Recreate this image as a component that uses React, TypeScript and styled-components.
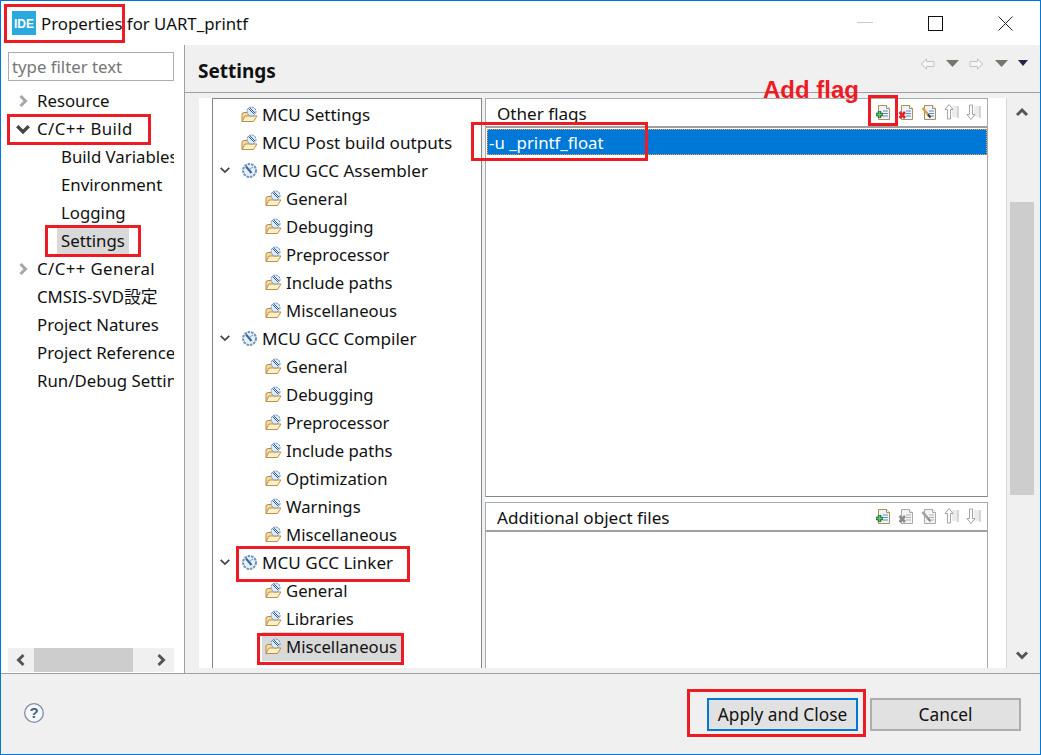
import React from "react";
import styled, { createGlobalStyle } from "styled-components";

const UI_FONT = '"Noto Sans", "Noto Sans CJK JP", sans-serif';
const RED = "#ed1c24";
const LINE = "#a0a0a0";

const GlobalStyle = createGlobalStyle`
  html, body {
    margin: 0;
    padding: 0;
    background: #fff;
  }
  * {
    box-sizing: border-box;
  }
`;

const Window = styled.div`
  position: relative;
  width: 1041px;
  height: 755px;
  border: 1px solid #0078d7;
  display: flex;
  flex-direction: column;
  overflow: hidden;
  font-family: ${UI_FONT};
  font-size: 16.8px;
  color: #111;
  background: #fff;
`;

const TitleBar = styled.div`
  height: 44px;
  flex: none;
  display: flex;
  align-items: center;
  padding-left: 11px;
`;

const TitleText = styled.span`
  margin-left: 5px;
`;

const WindowButtons = styled.div`
  margin-left: auto;
  display: flex;
`;

const WindowButton = styled.div`
  width: 70px;
  height: 44px;
  display: flex;
  align-items: center;
  justify-content: center;
`;

const Body = styled.div`
  flex: 1;
  min-height: 0;
  display: flex;
`;

const Sidebar = styled.div`
  width: 184px;
  flex: none;
  border-right: 1px solid ${LINE};
  padding: 7px 10px 1px 7px;
  display: flex;
  flex-direction: column;
`;

const FilterInput = styled.input`
  height: 29px;
  flex: none;
  width: 100%;
  border: 1px solid #abadb3;
  padding: 0 3px;
  font-family: ${UI_FONT};
  font-size: 16.8px;
  outline: none;
  &::placeholder {
    color: #777;
    opacity: 1;
  }
`;

const SideTree = styled.div`
  flex: 1;
  min-height: 0;
  margin-top: 6px;
  overflow: hidden;
`;

const Row = styled.div<{ $indent?: number }>`
  height: 28px;
  display: flex;
  align-items: center;
  white-space: nowrap;
  padding-left: ${(p) => p.$indent ?? 0}px;
`;

const Twisty = styled.span<{ $width: number; $shift?: number }>`
  width: ${(p) => p.$width}px;
  flex: none;
  display: flex;
  align-items: center;
  justify-content: center;
  padding-right: ${(p) => p.$shift ?? 0}px;
`;

const Label = styled.span<{ $selected?: boolean; $wide?: boolean }>`
  height: 27px;
  line-height: 26px;
  padding: 0 4px;
  margin-left: -4px;
  letter-spacing: ${(p) => (p.$wide ? "0.4px" : "normal")};
  background: ${(p) => (p.$selected ? "#d9d9d9" : "transparent")};
`;

const TreeItem = styled.span<{ $selected?: boolean; $child?: boolean }>`
  height: 29px;
  display: inline-flex;
  align-items: center;
  padding: 0 4px 0 3px;
  margin-left: -3px;
  font-size: ${(p) => (p.$child ? "16.7px" : "17.1px")};
  background: ${(p) => (p.$selected ? "#d9d9d9" : "transparent")};
`;

const HScroll = styled.div`
  height: 24px;
  flex: none;
  background: #f0f0f0;
  display: grid;
  grid-template-columns: 26px 99px 1fr 26px;
`;

const ScrollButton = styled.div`
  display: flex;
  align-items: center;
  justify-content: center;
  &:last-child {
    grid-column: 4;
  }
`;

const HThumb = styled.div`
  background: #cdcdcd;
`;

const Main = styled.div`
  flex: 1;
  min-width: 0;
  display: flex;
  flex-direction: column;
`;

const PageHeader = styled.div`
  height: 48px;
  flex: none;
  background: #f0f0f0;
  border-bottom: 1px solid ${LINE};
  display: flex;
  align-items: center;
  padding: 4px 12px 0 13px;
`;

const PageTitle = styled.h1`
  margin: 0;
  font-size: 19px;
  font-weight: 700;
`;

const HeaderTools = styled.div`
  margin-left: auto;
  margin-top: -14px;
  display: flex;
  align-items: center;
  gap: 10.5px;
`;

const PageContent = styled.div`
  flex: 1;
  min-height: 0;
  display: flex;
  background: #f0f0f0;
`;

const ScrolledArea = styled.div`
  flex: 1;
  min-width: 0;
  display: flex;
  flex-direction: column;
  padding: 5px 0 5px 14px;
`;

const Panes = styled.div`
  flex: 1;
  min-height: 0;
  display: flex;
  padding-left: 13px;
  background: #fff;
  border-right: 1px solid #d8d8d8;
`;

const TreePane = styled.div`
  width: 270px;
  flex: none;
  border: 1px solid #82878f;
  border-bottom: none;
  padding-top: 1px;
  overflow: hidden;
`;

const PaneSash = styled.div`
  width: 3px;
  flex: none;
  background: #f0f0f0;
`;

const IconSlot = styled.span`
  display: inline-flex;
  margin-right: 4px;
`;

const Lists = styled.div`
  flex: 1;
  min-width: 0;
  margin-right: 18px;
  display: flex;
  flex-direction: column;
  gap: 5px;
`;

const Section = styled.section<{ $grow?: boolean }>`
  height: ${(p) => (p.$grow ? "auto" : "399px")};
  flex: ${(p) => (p.$grow ? 1 : "none")};
  min-height: 0;
  border: 1px solid #a8abb0;
  border-bottom: ${(p) => (p.$grow ? "none" : "1px solid #82878f")};
  display: flex;
  flex-direction: column;
`;

const SectionHeader = styled.div`
  height: 29px;
  flex: none;
  display: flex;
  align-items: center;
  padding: 2px 6px 0 11px;
  font-size: 17.1px;
  border-bottom: 2px solid #a0a0a0;
`;

const SectionTools = styled.div`
  margin-left: auto;
  margin-top: -3px;
  display: flex;
  align-items: center;
  gap: 7px;
`;

const FlagRow = styled.div`
  height: 26px;
  margin: 1px 0 0 1px;
  padding-left: 2px;
  display: flex;
  align-items: center;
  background: #0078d7;
  color: #fff;
  outline: 1px dotted #f0a040;
  outline-offset: -1px;
`;

const VScroll = styled.div`
  width: 24px;
  flex: none;
  margin: 0 6px 0 3px;
  display: flex;
  flex-direction: column;
`;

const VButton = styled.div`
  height: 37px;
  flex: none;
  display: flex;
  align-items: center;
  justify-content: center;
`;

const VTrack = styled.div`
  flex: 1;
  min-height: 0;
  padding-top: 72px;
`;

const VThumb = styled.div`
  height: 293px;
  background: #cdcdcd;
`;

const Footer = styled.div`
  height: 81px;
  flex: none;
  background: #f0f0f0;
  border-top: 1px solid ${LINE};
  display: flex;
  align-items: center;
  padding: 0 19px 0 23px;
`;

const HelpSlot = styled.div`
  display: flex;
  margin-bottom: 3px;
`;

const Buttons = styled.div`
  margin-left: auto;
  display: flex;
  gap: 12px;
`;

const DialogButton = styled.button<{ $primary?: boolean }>`
  width: 151px;
  height: 33px;
  padding: 0;
  background: #e1e1e1;
  border: 2px solid ${(p) => (p.$primary ? "#0078d7" : "#adadad")};
  font-family: ${UI_FONT};
  font-size: 17.3px;
  color: #111;
`;

const Callout = styled.div<{ $x: number; $y: number; $w: number; $h: number }>`
  position: absolute;
  left: ${(p) => p.$x - 1}px;
  top: ${(p) => p.$y - 1}px;
  width: ${(p) => p.$w}px;
  height: ${(p) => p.$h}px;
  border: 3px solid ${RED};
  pointer-events: none;
`;

const CalloutText = styled.div`
  position: absolute;
  left: 762px;
  top: 75px;
  color: ${RED};
  font-family: "Liberation Sans", Arial, sans-serif;
  font-size: 24px;
  font-weight: 700;
  line-height: 28px;
  white-space: nowrap;
`;

const AppLogo = () => (
  <svg width="24" height="24" viewBox="0 0 24 24">
    <rect width="24" height="24" fill="#29a9e0" />
    <text x="12" y="16.5" textAnchor="middle" fill="#fff" fontFamily="Liberation Sans, sans-serif" fontWeight="700" fontSize="12">IDE</text>
  </svg>
);

const Chevron = ({ dir, color, size = 14, weight = 3 }: { dir: "up" | "down" | "left" | "right"; color: string; size?: number; weight?: number }) => {
  const paths = {
    up: "M2 10 L7 5 L12 10",
    down: "M2 4.5 L7 9.5 L12 4.5",
    left: "M9.5 2 L4.5 7 L9.5 12",
    right: "M4.5 2 L9.5 7 L4.5 12",
  };
  return (
    <svg width={size} height={size} viewBox="0 0 14 14">
      <path d={paths[dir]} fill="none" stroke={color} strokeWidth={weight} />
    </svg>
  );
};

const ToolFolderIcon = () => (
  <svg width="17" height="17" viewBox="0 0 17 17">
    <path d="M1 15.5V7.5L3 6.5H6L7 8H11V15.5Z" fill="#f7dca0" stroke="#b98a45" />
    <path d="M1 15.5L4 10H16L12.5 15.5Z" fill="#fdf0c8" stroke="#c08e48" />
    <circle cx="10.5" cy="5.5" r="4.5" fill="#dfe9f3" stroke="#5b85b5" strokeDasharray="2 1" />
    <path d="M7.5 2.5L13 8M9 2L14 7" stroke="#2f5f98" strokeWidth="1" />
  </svg>
);

const ToolIcon = () => (
  <svg width="17" height="17" viewBox="0 0 17 17">
    <circle cx="8.5" cy="8.5" r="6.5" fill="#e8eff6" stroke="#6f93ba" strokeWidth="2" strokeDasharray="2.5 1" />
    <path d="M5 4.5L10.5 11" stroke="#38659b" strokeWidth="2" />
    <path d="M9 7L12 5" stroke="#7b9cc0" />
  </svg>
);

const DocIcon = ({ kind, disabled }: { kind: "add" | "remove" | "edit"; disabled?: boolean }) => {
  const outline = disabled ? "#a8a8a8" : "#a98f5c";
  const line = disabled ? "#b0b0b0" : "#5d8fc4";
  return (
    <svg width="16" height="18" viewBox="0 0 16 18">
      <path d="M3.5 2.5H11.5L14.5 5.5V16.5H3.5Z" fill={disabled ? "#f4f4f4" : "#eef3fa"} stroke={outline} />
      <path d="M11.5 2.5V5.5H14.5" fill="#fff" stroke={outline} />
      <path d="M8 8H13M8 10.5H13M8 13H13" stroke={line} />
      {kind === "add" && (
        <>
          <path d="M4.5 8V15M1 11.5H8" stroke="#1d6b35" strokeWidth="3.4" />
          <path d="M4.5 8.5V14.5M1.5 11.5H7.5" stroke="#6cc46a" strokeWidth="1.4" />
        </>
      )}
      {kind === "remove" && <path d="M1.5 9L7 15M7 9L1.5 15" stroke={disabled ? "#8c8c8c" : "#e0242c"} strokeWidth="2.6" />}
      {kind === "edit" && (
        <>
          <path d="M1.5 5L7.5 12" stroke={disabled ? "#a0a0a0" : "#d9a13c"} strokeWidth="2.6" />
          <path d="M7 11.5L9.5 14.5" stroke={disabled ? "#8c8c8c" : "#3a3a3a"} strokeWidth="2" />
        </>
      )}
    </svg>
  );
};

const MoveIcon = ({ dir }: { dir: "up" | "down" }) => (
  <svg width="15" height="18" viewBox="0 0 15 18">
    <rect x="8" y="3" width="6" height="11" fill="#ececec" />
    <path d="M14 3V15" stroke="#c8c8c8" strokeWidth="1.4" />
    <path
      d={dir === "up" ? "M5 1.5L1 6.5H3.5V16H6.5V6.5H9Z" : "M5 16.5L1 11.5H3.5V2H6.5V11.5H9Z"}
      fill="#fff"
      stroke="#a4a4a4"
    />
  </svg>
);

const NavArrow = ({ dir }: { dir: "left" | "right" }) => (
  <svg width="15" height="12" viewBox="0 0 15 12">
    <path
      d={dir === "left" ? "M6.5 1L1 6L6.5 11V8.5H14V3.5H6.5Z" : "M8.5 1L14 6L8.5 11V8.5H1V3.5H8.5Z"}
      fill="#f6f6f6"
      stroke="#c4c4c4"
    />
  </svg>
);

const DropTriangle = ({ dark }: { dark?: boolean }) => (
  <svg width={dark ? 10 : 13} height="7" viewBox={dark ? "0 0 10 7" : "0 0 13 7"}>
    <path d={dark ? "M0 0H10L5 6Z" : "M0 0H13L6.5 7Z"} fill={dark ? "#2a2248" : "#76766c"} />
  </svg>
);

const HelpIcon = () => (
  <svg width="20" height="20" viewBox="0 0 20 20">
    <circle cx="10" cy="10" r="9.3" fill="#f6f8fb" stroke="#7e8ea8" strokeWidth="1.3" />
    <text x="10" y="15.2" textAnchor="middle" fontFamily="Liberation Sans, sans-serif" fontWeight="700" fontSize="15" fill="#4a5f84">?</text>
  </svg>
);

const toolbarIcons = (disabled: boolean) => (
  <>
    <DocIcon kind="add" />
    <DocIcon kind="remove" disabled={disabled} />
    <DocIcon kind="edit" disabled={disabled} />
    <MoveIcon dir="up" />
    <MoveIcon dir="down" />
  </>
);

const sideItems = [
  { label: "Resource", open: false, arrow: true },
  { label: "C/C++ Build", open: true, arrow: true, wide: true },
  { label: "Build Variables", child: true },
  { label: "Environment", child: true },
  { label: "Logging", child: true },
  { label: "Settings", child: true, selected: true },
  { label: "C/C++ General", open: false, arrow: true, wide: true },
  { label: "CMSIS-SVD設定" },
  { label: "Project Natures" },
  { label: "Project References" },
  { label: "Run/Debug Settings" },
];

type ToolRow = { label: string; level: 0 | 1; group?: boolean; selected?: boolean };

const toolRows: ToolRow[] = [
  { label: "MCU Settings", level: 0 },
  { label: "MCU Post build outputs", level: 0 },
  { label: "MCU GCC Assembler", level: 0, group: true },
  ...["General", "Debugging", "Preprocessor", "Include paths", "Miscellaneous"].map((label) => ({ label, level: 1 as const })),
  { label: "MCU GCC Compiler", level: 0, group: true },
  ...["General", "Debugging", "Preprocessor", "Include paths", "Optimization", "Warnings", "Miscellaneous"].map((label) => ({ label, level: 1 as const })),
  { label: "MCU GCC Linker", level: 0, group: true },
  { label: "General", level: 1 },
  { label: "Libraries", level: 1 },
  { label: "Miscellaneous", level: 1, selected: true },
];

const App: React.FC = () => (
  <>
    <GlobalStyle />
    <Window>
      <TitleBar>
        <AppLogo />
        <TitleText>Properties for UART_printf</TitleText>
        <WindowButtons>
          <WindowButton>
            <svg width="16" height="2" viewBox="0 0 16 2"><rect width="16" height="1" fill="#c8c8c8" /></svg>
          </WindowButton>
          <WindowButton>
            <svg width="15" height="15" viewBox="0 0 15 15"><rect x="0.5" y="0.5" width="14" height="14" fill="none" stroke="#111" /></svg>
          </WindowButton>
          <WindowButton>
            <svg width="15" height="15" viewBox="0 0 15 15"><path d="M0.5 0.5L14.5 14.5M14.5 0.5L0.5 14.5" stroke="#222" /></svg>
          </WindowButton>
        </WindowButtons>
      </TitleBar>
      <Body>
        <Sidebar>
          <FilterInput placeholder="type filter text" />
          <SideTree>
            {sideItems.map((item) => (
              <Row key={item.label} $indent={item.child ? 53 : 0}>
                {!item.child && (
                  <Twisty $width={29}>
                    {item.arrow && (
                      <Chevron
                        dir={item.open ? "down" : "right"}
                        color={item.open ? "#444" : "#a6a6a6"}
                        size={item.open ? 16 : 14}
                      />
                    )}
                  </Twisty>
                )}
                <Label $selected={item.selected} $wide={item.wide}>{item.label}</Label>
              </Row>
            ))}
          </SideTree>
          <HScroll>
            <ScrollButton><Chevron dir="left" color="#555" /></ScrollButton>
            <HThumb />
            <ScrollButton><Chevron dir="right" color="#555" /></ScrollButton>
          </HScroll>
        </Sidebar>
        <Main>
          <PageHeader>
            <PageTitle>Settings</PageTitle>
            <HeaderTools>
              <NavArrow dir="left" />
              <DropTriangle />
              <NavArrow dir="right" />
              <DropTriangle />
              <DropTriangle dark />
            </HeaderTools>
          </PageHeader>
          <PageContent>
            <ScrolledArea>
              <Panes>
                <TreePane>
                  {toolRows.map((row, i) => (
                    <Row key={i} $indent={row.level === 1 ? 52 : row.group ? 0 : 28}>
                      {row.group && (
                        <Twisty $width={28} $shift={5}>
                          <Chevron dir="down" color="#444" size={12} weight={2} />
                        </Twisty>
                      )}
                      <TreeItem $selected={row.selected} $child={row.level === 1}>
                        <IconSlot>{row.group ? <ToolIcon /> : <ToolFolderIcon />}</IconSlot>
                        {row.label}
                      </TreeItem>
                    </Row>
                  ))}
                </TreePane>
                <PaneSash />
                <Lists>
                  <Section>
                    <SectionHeader>
                      Other flags
                      <SectionTools>{toolbarIcons(false)}</SectionTools>
                    </SectionHeader>
                    <FlagRow>-u _printf_float</FlagRow>
                  </Section>
                  <Section $grow>
                    <SectionHeader>
                      Additional object files
                      <SectionTools>{toolbarIcons(true)}</SectionTools>
                    </SectionHeader>
                  </Section>
                </Lists>
              </Panes>
            </ScrolledArea>
            <VScroll>
              <VButton><Chevron dir="up" color="#555" /></VButton>
              <VTrack><VThumb /></VTrack>
              <VButton><Chevron dir="down" color="#555" /></VButton>
            </VScroll>
          </PageContent>
        </Main>
      </Body>
      <Footer>
        <HelpSlot><HelpIcon /></HelpSlot>
        <Buttons>
          <DialogButton $primary>Apply and Close</DialogButton>
          <DialogButton>Cancel</DialogButton>
        </Buttons>
      </Footer>
      <Callout $x={4} $y={4} $w={121} $h={39} />
      <Callout $x={7} $y={114} $w={144} $h={31} />
      <Callout $x={45} $y={225} $w={96} $h={32} />
      <Callout $x={236} $y={546} $w={174} $h={36} />
      <Callout $x={257} $y={633} $w={147} $h={32} />
      <Callout $x={471} $y={122} $w={177} $h={39} />
      <Callout $x={868} $y={95} $w={30} $h={31} />
      <Callout $x={687} $y={689} $w={179} $h={48} />
      <CalloutText>Add flag</CalloutText>
    </Window>
  </>
);

export default App;
